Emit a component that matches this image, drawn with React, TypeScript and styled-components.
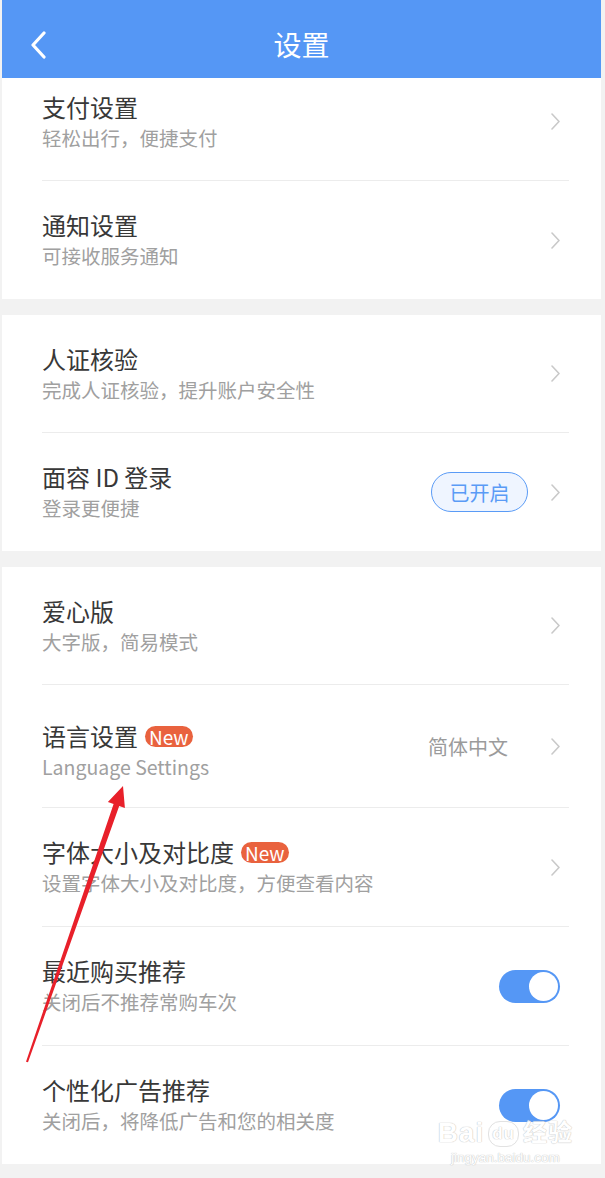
import styled, { createGlobalStyle } from 'styled-components'

const GlobalStyle = createGlobalStyle`
  html, body {
    margin: 0;
    padding: 0;
    background: #f2f2f2;
  }
  body {
    font-family: "Noto Sans CJK SC", "Noto Sans", sans-serif;
  }
`

const Screen = styled.div`
  position: relative;
  width: 605px;
  min-height: 1178px;
  padding: 0 4px 0 2px;
  box-sizing: border-box;
  background: #f2f2f2;
  overflow: hidden;
`

const Header = styled.header`
  position: relative;
  z-index: 2;
  height: 78px;
  display: grid;
  grid-template-columns: 1fr auto 1fr;
  align-items: center;
  background: #5597f5;
  color: #fff;
`

const BackButton = styled.div`
  padding-left: 27px;
  padding-top: 12px;
  display: flex;
  align-items: center;
`

const HeaderTitle = styled.h1`
  margin: 0;
  font-size: 28px;
  font-weight: 400;
  line-height: 1;
  padding-top: 10px;
`

const Scroller = styled.div`
  overflow: hidden;
`

const ScrollContent = styled.div`
  margin-top: -15px;
`

const Section = styled.section`
  background: #fff;
  padding: 0 32px 0 40px;
  margin-bottom: 16px;
`

const Row = styled.div<{ $h: number }>`
  height: ${p => p.$h}px;
  display: flex;
  align-items: center;
  padding-right: 9px;
  box-sizing: border-box;
  border-bottom: 1px solid #ececec;

  &:last-child {
    border-bottom: none;
  }
`

const TextBlock = styled.div<{ $shift?: number }>`
  flex: 1;
  min-width: 0;
  padding-top: ${p => (p.$shift ? p.$shift * 2 : 0)}px;
`

const Title = styled.div`
  display: flex;
  align-items: center;
  font-size: 24px;
  line-height: 30px;
  color: #383838;
`

const Subtitle = styled.div`
  margin-top: 2px;
  font-size: 19.5px;
  line-height: 28px;
  color: #a0a0a0;
`

const NewBadge = styled.span`
  margin-left: 7px;
  height: 21px;
  padding: 0 4px;
  border-radius: 11px;
  background: #e9623e;
  color: #fff;
  font-size: 19px;
  line-height: 21px;
`

const Value = styled.span`
  margin-right: 43px;
  font-size: 20px;
  color: #9b9b9b;
`

const Pill = styled.span`
  margin-right: 23px;
  width: 97px;
  height: 40px;
  box-sizing: border-box;
  display: flex;
  align-items: center;
  justify-content: center;
  border: 1.5px solid #5a9bf6;
  border-radius: 20px;
  background: #eff5ff;
  color: #5a9bf6;
  font-size: 20px;
`

const Toggle = styled.div<{ $on: boolean }>`
  width: 61px;
  height: 33px;
  border-radius: 17px;
  background: ${p => (p.$on ? '#5597f5' : '#e5e5e5')};
  padding: 2px;
  box-sizing: border-box;
  display: flex;
  justify-content: ${p => (p.$on ? 'flex-end' : 'flex-start')};
`

const Knob = styled.div`
  width: 29px;
  height: 29px;
  border-radius: 50%;
  background: #fff;
`

const Overlay = styled.svg`
  position: absolute;
  left: 0;
  top: 0;
  pointer-events: none;
  z-index: 3;
`

const Watermark = styled.div`
  position: absolute;
  right: 32px;
  bottom: 14px;
  z-index: 3;
  display: flex;
  flex-direction: column;
  align-items: center;
  color: #fff;
  opacity: 0.85;
  font-family: "Liberation Sans", "Noto Sans CJK SC", sans-serif;
  text-shadow: 0 0 1px #bbb, 0 0 1px #bbb;
`

const MarkLogo = styled.div`
  display: flex;
  align-items: flex-end;
  font-size: 28px;
  font-weight: 700;
  line-height: 28px;
  letter-spacing: 1px;
`

const MarkDu = styled.span`
  margin: 0 4px;
  font-size: 17px;
  line-height: 24px;
  padding: 0 3px;
  border: 1.5px solid #ddd;
  border-radius: 12px;
`

const MarkCn = styled.span`
  font-size: 24px;
`

const MarkUrl = styled.div`
  font-size: 13.5px;
  line-height: 16px;
  margin-top: 3px;
`

const Chevron = () => (
  <svg width="9" height="17" viewBox="0 0 9 17">
    <polyline points="1,1 8,8.5 1,16" fill="none" stroke="#c9c9c9" strokeWidth="1.6" strokeLinecap="round" strokeLinejoin="round" />
  </svg>
)

type Item = {
  title: string
  sub: string
  h: number
  badge?: boolean
  value?: string
  pill?: string
  toggle?: boolean
  shift?: number
}

const sections: Item[][] = [
  [
    { title: '支付设置', sub: '轻松出行，便捷支付', h: 118 },
    { title: '通知设置', sub: '可接收服务通知', h: 118 },
  ],
  [
    { title: '人证核验', sub: '完成人证核验，提升账户安全性', h: 118 },
    { title: '面容 ID 登录', sub: '登录更便捷', h: 118, pill: '已开启' },
  ],
  [
    { title: '爱心版', sub: '大字版，简易模式', h: 118 },
    { title: '语言设置', sub: 'Language Settings', h: 123, badge: true, value: '简体中文', shift: 5 },
    { title: '字体大小及对比度', sub: '设置字体大小及对比度，方便查看内容', h: 119, badge: true },
    { title: '最近购买推荐', sub: '关闭后不推荐常购车次', h: 119, toggle: true },
    { title: '个性化广告推荐', sub: '关闭后，将降低广告和您的相关度', h: 118, toggle: true },
  ],
]

const App = () => {
  return (
    <Screen>
      <GlobalStyle />
      <Header>
        <BackButton>
          <svg width="18" height="28" viewBox="0 0 18 28">
            <polyline points="15,2 4,14 15,26" fill="none" stroke="#fff" strokeWidth="3.2" strokeLinecap="round" strokeLinejoin="round" />
          </svg>
        </BackButton>
        <HeaderTitle>设置</HeaderTitle>
        <div />
      </Header>

      <Scroller>
        <ScrollContent>
          {sections.map((items, i) => (
            <Section key={i}>
              {items.map(item => (
                <Row key={item.title} $h={item.h}>
                  <TextBlock $shift={item.shift}>
                    <Title>
                      {item.title}
                      {item.badge && <NewBadge>New</NewBadge>}
                    </Title>
                    <Subtitle>{item.sub}</Subtitle>
                  </TextBlock>
                  {item.value && <Value>{item.value}</Value>}
                  {item.pill && <Pill>{item.pill}</Pill>}
                  {item.toggle ? (
                    <Toggle $on>
                      <Knob />
                    </Toggle>
                  ) : (
                    <Chevron />
                  )}
                </Row>
              ))}
            </Section>
          ))}
        </ScrollContent>
      </Scroller>

      <Overlay width="605" height="1178" viewBox="0 0 605 1178">
        <polygon
          points="123,786 124.9,807.9 119.2,805.9 28,1062.3 26,1061.7 113.6,803.9 107.9,801.9"
          fill="#e8202a"
        />
      </Overlay>

      <Watermark>
        <MarkLogo>
          Bai<MarkDu>du</MarkDu>
          <MarkCn>经验</MarkCn>
        </MarkLogo>
        <MarkUrl>jingyan.baidu.com</MarkUrl>
      </Watermark>
    </Screen>
  )
}

export default App
